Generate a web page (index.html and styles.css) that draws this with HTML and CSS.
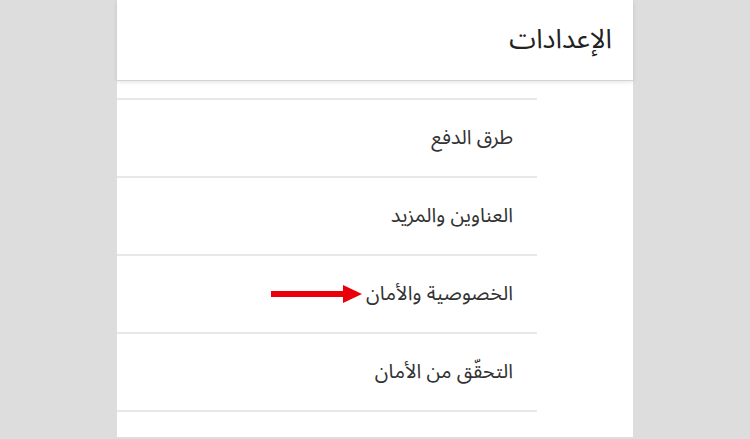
FILE: index.html
```html
<!DOCTYPE html>
<html lang="ar" dir="rtl">
<head>
<meta charset="utf-8">
<title>الإعدادات</title>
<link rel="stylesheet" href="styles.css">
</head>
<body>
<div class="panel">
  <header class="header">
    <h1 class="title">الإعدادات</h1>
  </header>
  <ul class="list">
    <li class="item">طرق الدفع</li>
    <li class="item">العناوين والمزيد</li>
    <li class="item"><span>الخصوصية والأمان</span><svg class="arrow" width="92" height="20" viewBox="0 0 92 20" aria-hidden="true"><rect x="0" y="7" width="75" height="6" fill="#e8000b"/><polygon points="72,1 91,10 72,19" fill="#e8000b"/></svg></li>
    <li class="item">التحقّق من الأمان</li>
  </ul>
</div>
</body>
</html>
```
FILE: styles.css
```css
html, body {
  margin: 0;
  padding: 0;
}
body {
  background: #dddddd;
  width: 750px;
  height: 439px;
  overflow: hidden;
  font-family: "Noto Sans Arabic", "DejaVu Sans", sans-serif;
  color: #333333;
}
.panel {
  margin-right: 117px;
  width: 516px;
  height: 437px;
  background: #ffffff;
  display: flex;
  flex-direction: column;
}
.header {
  height: 80px;
  display: flex;
  align-items: center;
  padding-right: 21px;
  box-shadow: 0 1px 0 #d4d4d4, 0 2px 4px rgba(0, 0, 0, 0.12);
  position: relative;
}
.title {
  margin: 0;
  margin-top: -2px;
  font-size: 27px;
  font-weight: normal;
  color: #222222;
}
.list {
  list-style: none;
  margin: 0;
  margin-right: 96px;
  padding: 18px 0 0 0;
}
.item {
  height: 76px;
  border-top: 2px solid #e8e8e8;
  display: flex;
  align-items: center;
  gap: 3px;
  padding-right: 24px;
  font-size: 20px;
}
.item:last-child {
  border-bottom: 2px solid #e8e8e8;
}
.arrow {
  display: block;
}
```
